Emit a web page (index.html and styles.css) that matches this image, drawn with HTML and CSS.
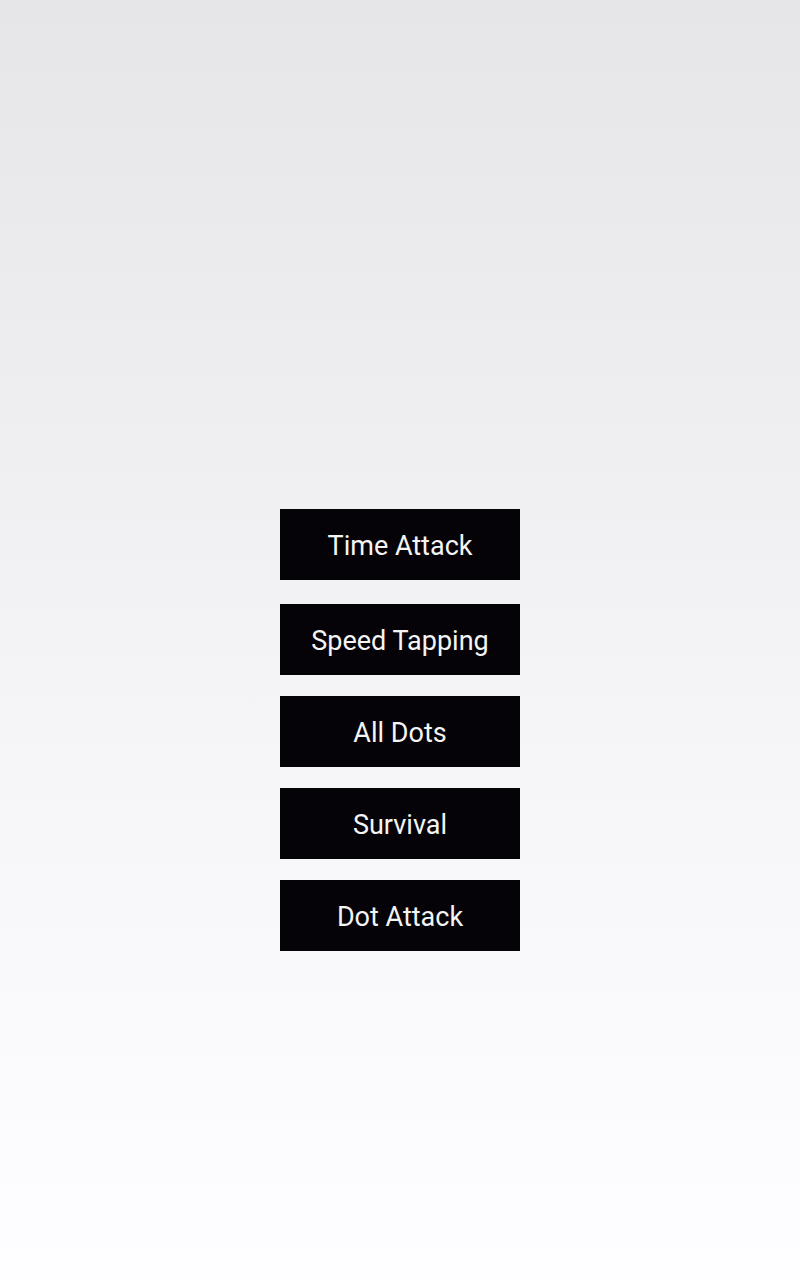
FILE: index.html
```html
<!DOCTYPE html>
<html>
<head>
<meta charset="utf-8">
<link rel="stylesheet" href="styles.css">
</head>
<body>
<div class="screen">
  <div class="menu">
    <div class="btn first">Time Attack</div>
    <div class="btn">Speed Tapping</div>
    <div class="btn">All Dots</div>
    <div class="btn">Survival</div>
    <div class="btn">Dot Attack</div>
  </div>
</div>
</body>
</html>
```
FILE: styles.css
```css
html, body {
  margin: 0;
  padding: 0;
}
.screen {
  width: 800px;
  height: 1280px;
  background: linear-gradient(to bottom, #e6e5e8 0%, #efeef1 35%, #f6f5f8 60%, #fefdff 100%);
  font-family: Roboto, "Noto Sans", sans-serif;
}
.menu {
  display: flex;
  flex-direction: column;
  align-items: center;
  padding-top: 509px;
  gap: 21px;
}
.btn {
  width: 240px;
  height: 71px;
  background: #050307;
  color: #f4f4f4;
  font-size: 27px;
  padding-top: 3px;
  box-sizing: border-box;
  display: flex;
  align-items: center;
  justify-content: center;
}
.btn.first {
  margin-bottom: 3px;
}
```
